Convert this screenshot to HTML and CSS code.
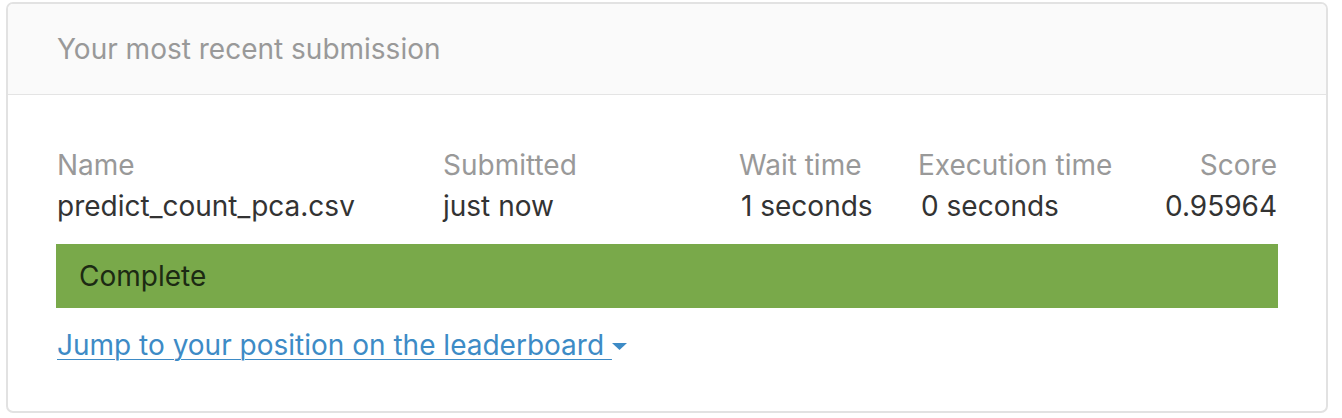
FILE: index.html
```html
<!DOCTYPE html>
<html>
<head>
<meta charset="utf-8">
<link rel="stylesheet" href="styles.css">
</head>
<body>
<div class="card">
  <div class="card-header">Your most recent submission</div>
  <div class="card-body">
    <div class="sub-table">
      <div class="th c-name">Name</div>
      <div class="th c-sub">Submitted</div>
      <div class="th c-wait">Wait time</div>
      <div class="th c-exec">Execution time</div>
      <div class="th c-score">Score</div>
      <div class="td c-name">predict_count_pca.csv</div>
      <div class="td c-sub">just now</div>
      <div class="td c-wait">1 seconds</div>
      <div class="td c-exec">0 seconds</div>
      <div class="td c-score">0.95964</div>
    </div>
    <div class="status">Complete</div>
    <a class="jump" href="#">Jump to your position on the leaderboard&nbsp;<svg class="caret" width="15" height="7" viewBox="0 0 15 7"><path d="M0 0 H15 L7.5 7 Z" fill="#3d8bc6"/></svg></a>
  </div>
</div>
</body>
</html>
```
FILE: styles.css
```css
html, body {
  margin: 0;
  padding: 0;
  background: #fff;
}
body {
  font-family: Inter, "Noto Sans", "Liberation Sans", sans-serif;
  padding: 2px 14px 0 6px;
}
.card {
  border: 2px solid #e2e2e2;
  border-radius: 7px;
  height: 411px;
  box-sizing: border-box;
  overflow: hidden;
}
.card-header {
  background: #fafafa;
  border-bottom: 1px solid #e4e4e4;
  height: 91px;
  box-sizing: border-box;
  display: flex;
  align-items: center;
  padding-left: 49px;
  font-size: 28px;
  color: #999;
}
.card-body {
  padding: 50px 48px 0 48px;
}
.sub-table {
  display: grid;
  grid-template-columns: 387px 296px 179px 1fr auto;
  font-size: 28px;
  line-height: 41px;
  margin-bottom: 17px;
}
.th { color: #999; }
.td { color: #333; }
.c-name { padding-left: 1px; }
.td.c-wait { padding-left: 2px; }
.td.c-exec { padding-left: 3px; }
.c-score { text-align: right; padding-right: 1px; }
.status {
  background: #79a94a;
  height: 64px;
  display: flex;
  align-items: center;
  padding-left: 23px;
  font-size: 28px;
  color: #1c2a13;
}
.jump {
  display: inline-block;
  margin-top: 19px;
  font-size: 28px;
  line-height: 36px;
  color: #3d8bc6;
  text-decoration: underline;
  text-decoration-thickness: 1px;
  text-underline-offset: 4px;
  padding-left: 1px;
}
.caret {
  display: inline-block;
  vertical-align: middle;
  margin-left: 0;
  position: relative;
  top: -1px;
}
```
